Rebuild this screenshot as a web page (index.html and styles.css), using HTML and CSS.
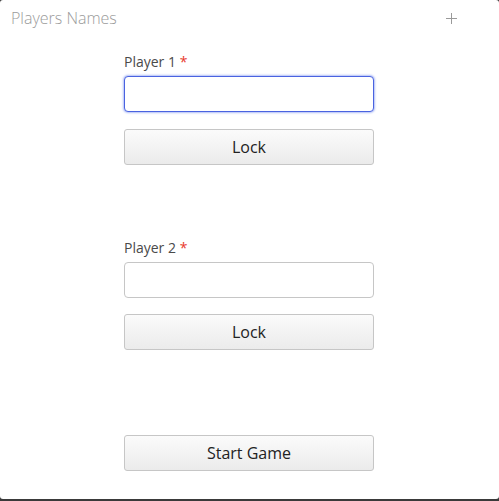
FILE: index.html
```html
<!DOCTYPE html>
<html>
<head>
<meta charset="utf-8">
<link rel="stylesheet" href="styles.css">
</head>
<body>
<div class="panel">
  <div class="header">
    <span class="title">Players Names</span>
    <svg class="plus" width="11" height="11" viewBox="0 0 11 11"><path d="M5.5 0V11M0 5.5H11" stroke="#9a9a9a" stroke-width="1" fill="none"/></svg>
  </div>
  <div class="form">
    <div class="player">
      <label class="label">Player 1 <span class="req">*</span></label>
      <input class="input focused" type="text">
      <button class="btn">Lock</button>
    </div>
    <div class="player second">
      <label class="label">Player 2 <span class="req">*</span></label>
      <input class="input" type="text">
      <button class="btn">Lock</button>
    </div>
    <button class="btn start">Start Game</button>
  </div>
</div>
</body>
</html>
```
FILE: styles.css
```css
html, body { margin: 0; padding: 0; }
body {
  background: #3a3a3a;
  width: 499px;
  height: 501px;
  font-family: "Open Sans", sans-serif;
}
.panel {
  background: #fff;
  width: 499px;
  height: 499px;
  border-radius: 3px;
  box-sizing: border-box;
}
.header {
  height: 36px;
  display: flex;
  align-items: center;
  justify-content: space-between;
  padding: 0 42px 0 11px;
}
.title {
  font-size: 16px;
  font-weight: 300;
  color: #9b9b9b;
}
.plus { display: block; }
.form {
  margin-left: 124px;
  width: 250px;
  padding-top: 16px;
  display: flex;
  flex-direction: column;
}
.player { display: flex; flex-direction: column; }
.second { margin-top: 73px; }
.label {
  font-size: 14px;
  line-height: 20px;
  color: #4a4a4a;
  margin-bottom: 4px;
}
.req { color: #e8392c; }
.input {
  box-sizing: border-box;
  height: 36px;
  width: 250px;
  border: 1px solid #c6c6c6;
  border-radius: 4px;
  background: #fff;
  margin: 0;
  outline: none;
  font-family: "Open Sans", sans-serif;
}
.input.focused {
  border: 1px solid #4a63e0;
  box-shadow: 0 0 2px 1px rgba(80, 110, 235, 0.45);
}
.btn {
  box-sizing: border-box;
  margin-top: 17px;
  height: 36px;
  width: 250px;
  border: 1px solid #c6c6c6;
  border-radius: 3px;
  background: linear-gradient(#fbfbfb, #ebebeb);
  font-family: "Open Sans", sans-serif;
  font-size: 16px;
  line-height: 20px;
  color: #222;
  padding: 0 0 1px;
}
.second .btn { margin-top: 16px; }
.start { margin-top: 85px; }
```
